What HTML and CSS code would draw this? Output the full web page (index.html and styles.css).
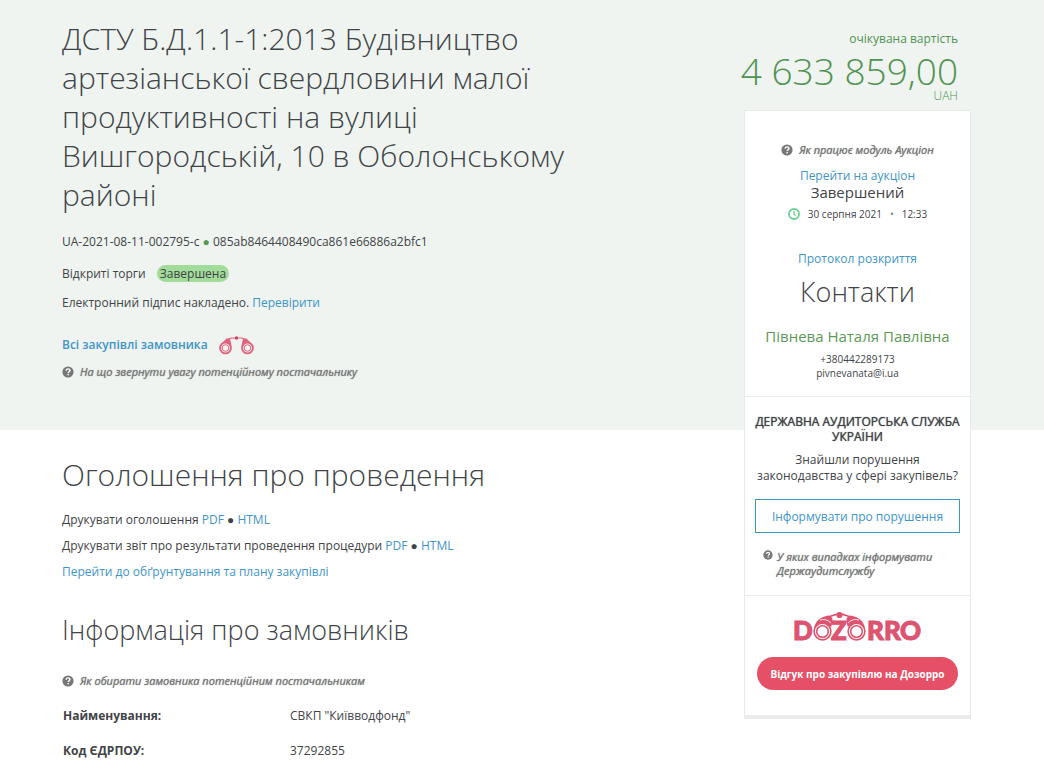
FILE: index.html
```html
<!DOCTYPE html>
<html lang="uk">
<head>
<meta charset="utf-8">
<meta name="viewport" content="width=device-width, initial-scale=1">
<title>Закупівля UA-2021-08-11-002795-c</title>
<link rel="stylesheet" href="styles.css">
</head>
<body>
<svg class="sprite" aria-hidden="true">
  <symbol id="question" viewBox="0 0 12 12">
    <circle cx="6" cy="6" r="5.6" fill="currentColor"/>
    <path d="M4.1 4.7c.1-1.200.9-1.800 1.900-1.800s1.900.6 1.900 1.600c0 1.200-1.500 1.200-1.700 2.500" fill="none" stroke="#fff" stroke-width="1.400"/>
    <rect x="5.400" y="7.900" width="1.500" height="1.400" fill="#fff"/>
  </symbol>
</svg>
<div class="page">
  <header class="hero">
    <h1 class="title">ДСТУ Б.Д.1.1-1:2013 Будівництво артезіанської свердловини малої продуктивності на вулиці Вишгородській, 10 в Оболонському районі</h1>
    <p class="tender-id">UA-2021-08-11-002795-c <span class="dot-green">●</span> 085ab8464408490ca861e66886a2bfc1</p>
    <p class="tender-type">Відкриті торги <span class="status">Завершена</span></p>
    <p class="signature">Електронний підпис накладено. <a href="#">Перевірити</a></p>
    <p class="customer"><a class="strong-link" href="#">Всі закупівлі замовника</a>
      <a href="#" aria-label="Dozorro"><svg class="binoculars" viewBox="0 0 36 20" fill="none" stroke="#e0627c">
        <path d="M2 9l5.500-5.500 3.500 0 1.500 7zM33 9l-5.500-5.500-3.500 0-1.500 7z" fill="#e0627c" stroke="none"/>
        <circle cx="6.500" cy="13" r="5.400" fill="#eff4f1" stroke-width="1.900"/>
        <circle cx="6.500" cy="13" r="3.300" stroke-width="1"/>
        <circle cx="28.500" cy="13" r="5.400" fill="#eff4f1" stroke-width="1.900"/>
        <circle cx="28.500" cy="13" r="3.300" stroke-width="1"/>
        <path d="M9 4.500l3-1.500h11l3 1.500" stroke-width="1.200"/>
        <circle cx="17.500" cy="3" r="1.700" fill="#d0405f" stroke="none"/>
      </svg></a></p>
    <a class="help" href="#"><svg class="help-icon" aria-hidden="true"><use href="#question"/></svg><span>На що звернути увагу потенційному постачальнику</span></a>
  </header>

  <main class="content">
    <section>
      <h2 class="heading">Оголошення про проведення</h2>
      <ul class="prints">
        <li>Друкувати оголошення <a href="#">PDF</a> ● <a href="#">HTML</a></li>
        <li>Друкувати звіт про результати проведення процедури <a href="#">PDF</a> ● <a href="#">HTML</a></li>
        <li><a href="#">Перейти до обґрунтування та плану закупівлі</a></li>
      </ul>
    </section>
    <section class="info">
      <h2 class="heading heading-small">Інформація про замовників</h2>
      <a class="help" href="#"><svg class="help-icon" aria-hidden="true"><use href="#question"/></svg><span>Як обирати замовника потенційним постачальникам</span></a>
      <table class="details">
        <tr><th scope="row">Найменування:</th><td>СВКП "Київводфонд"</td></tr>
        <tr><th scope="row">Код ЄДРПОУ:</th><td>37292855</td></tr>
      </table>
    </section>
  </main>

  <aside class="side">
    <div class="price">
      <p class="price-label">очікувана вартість</p>
      <p class="price-value">4 633 859,00</p>
      <p class="price-currency">UAH</p>
    </div>
    <div class="card">
      <section class="auction">
        <a class="help" href="#"><svg class="help-icon" aria-hidden="true"><use href="#question"/></svg><span>Як працює модуль Аукціон</span></a>
        <a class="auction-link" href="#">Перейти на аукціон</a>
        <p class="auction-state">Завершений</p>
        <p class="auction-date"><svg class="clock" viewBox="0 0 12 12" fill="none" stroke="#6ccf8f" aria-hidden="true">
          <circle cx="6" cy="6" r="5" stroke-width="1.800"/><path d="M6 3v3.400l1.800 1" stroke-width="1.200"/></svg>
          <span>30 серпня 2021</span><span class="bullet">•</span><span>12:33</span></p>
        <a class="protocol" href="#">Протокол розкриття</a>
        <h2 class="contacts">Контакти</h2>
        <p class="person">Півнева Наталя Павлівна</p>
        <p class="contact-line">+380442289173</p>
        <p class="contact-line">pivnevanata@i.ua</p>
      </section>
      <section class="audit">
        <h3 class="audit-title">ДЕРЖАВНА АУДИТОРСЬКА СЛУЖБА УКРАЇНИ</h3>
        <p class="audit-text">Знайшли порушення законодавства у сфері закупівель?</p>
        <button class="outline-button" type="button">Інформувати про порушення</button>
        <a class="help help-audit" href="#"><svg class="help-icon help-icon-small" aria-hidden="true"><use href="#question"/></svg><span>У яких випадках інформувати Держаудитслужбу</span></a>
      </section>
      <section class="dozorro">
        <svg class="logo" viewBox="0 0 128 30" role="img" aria-label="DOZORRO">
          <g fill="#dc5470">
            <path d="M20 15q3-8 9-10l5-1.500q5 1 4.500 5l-1 6zM71 15q-3-8-9-10l-5-1.500q-5 1-4.500 5l1 6z"/>
            <path d="M34 5L45.500 1.500 57 5" fill="none" stroke="#dc5470" stroke-width="1.800"/>
            <circle cx="45.500" cy="3" r="3.100"/>
          </g>
          <path d="M26 8q6-2 11 3M65 8q-6-2-11 3" fill="none" stroke="#fff" stroke-width=".8"/>
          <g fill="none" stroke="#dc5470" stroke-width="1.600">
            <circle cx="28.500" cy="19.500" r="8.400" fill="#fff"/>
            <circle cx="28.500" cy="19.500" r="5.800"/>
            <circle cx="62.500" cy="19.500" r="8.400" fill="#fff"/>
            <circle cx="62.500" cy="19.500" r="5.800"/>
          </g>
          <g class="logo-letters">
            <text x="-1" y="28">D</text><text x="37" y="28">Z</text>
            <text x="73" y="28">R</text><text x="90" y="28">R</text><text x="106" y="28">O</text>
          </g>
        </svg>
        <button class="review-button" type="button">Відгук про закупівлю на Дозорро</button>
      </section>
    </div>
  </aside>
</div>
</body>
</html>
```
FILE: styles.css
```css
* { box-sizing: border-box; }

body {
  margin: 0;
  background: #fff;
  color: #414447;
  font-family: "Open Sans", "Noto Sans", sans-serif;
  font-size: 12px;
  line-height: 18px;
}

h1, h2, h3, p, ul { margin: 0; padding: 0; font-weight: 400; }
ul { list-style: none; }
a { color: #3e95c8; text-decoration: none; }
button { font-family: inherit; cursor: pointer; }
.sprite { display: none; }

.page {
  display: grid;
  grid-template-columns: minmax(0, 1fr) 240px 73px;
  grid-template-rows: auto 1fr;
}

.hero {
  grid-column: 1 / -1;
  grid-row: 1;
  padding: 19px 313px 49px 62px;
  background: #eff4f1;
}

.content {
  grid-column: 1;
  grid-row: 2;
  padding: 25px 24px 0 62px;
}

.side {
  grid-column: 2;
  grid-row: 1 / 3;
  padding: 31px 0 24px;
}

.title {
  max-width: 540px;
  font-size: 30px;
  font-weight: 300;
  line-height: 39px;
}

.tender-id { margin-top: 19px; }
.dot-green { color: #4f9a56; }
.tender-type { margin-top: 14px; }
.status {
  display: inline-block;
  margin-left: 8px;
  padding: 0 3px;
  border-radius: 9px;
  background: #a2dc9b;
  line-height: 17px;
}
.signature { margin-top: 11px; }
.customer {
  display: flex;
  align-items: center;
  gap: 11px;
  height: 18px;
  margin-top: 24px;
}
.strong-link { font-weight: 600; }
.binoculars { display: block; width: 36px; height: 20px; }

.help {
  display: flex;
  align-items: center;
  gap: 6px;
  margin-top: 9px;
  color: #777;
  font-size: 11px;
  font-style: italic;
  text-shadow: 0 0 1px currentColor;
}
.help-icon { flex: none; width: 12px; height: 12px; }
.help-icon-small { width: 10px; height: 10px; }

.heading {
  font-size: 30px;
  font-weight: 300;
  line-height: 39px;
}
.heading-small { font-size: 27px; }
.prints {
  display: grid;
  gap: 8px;
  margin-top: 17px;
}
.info { margin-top: 29px; }
.info .help { margin-top: 23px; }
.details {
  margin-top: 8px;
  border-collapse: collapse;
}
.details th, .details td { height: 35px; padding: 0 0 0 1px; text-align: left; }
.details th { width: 227px; font-weight: 700; }

.price {
  padding-right: 13px;
  color: #4f9350;
  text-align: right;
}
.price-label { line-height: 16px; }
.price-value {
  font-size: 37px;
  font-weight: 300;
  line-height: 48px;
  white-space: nowrap;
}
.price-currency { margin-top: -7px; font-weight: 300; line-height: 16px; }

.card {
  margin: 6px 0 0 13px;
  border: 1px solid #e8ebe9;
  border-bottom: 4px solid #eaeaea;
  background: #fff;
  text-align: center;
}

.auction { padding: 30px 8px 16px; }
.auction .help { justify-content: center; margin: 0; }
.auction-link { display: block; margin-top: 8px; }
.auction-state { font-size: 15px; line-height: 14px; }
.auction-date {
  display: flex;
  align-items: center;
  justify-content: center;
  gap: 8px;
  margin-top: 6px;
  font-size: 10px;
}
.clock { width: 12px; height: 12px; }
.bullet { color: #4f9a56; }
.protocol { display: block; margin-top: 27px; }
.contacts {
  margin-top: 7px;
  font-size: 27px;
  font-weight: 300;
  line-height: 34px;
}
.person {
  margin: 18px 0 7px;
  color: #5c9a56;
  font-size: 15px;
}
.contact-line { font-size: 10px; line-height: 14px; }

.audit {
  padding: 17px 10px;
  border-top: 1px solid #e8ebe9;
}
.audit-title {
  margin: 0 -6px;
  font-size: 12px;
  line-height: 15px;
  text-shadow: 0 0 1px currentColor;
}
.audit-text { margin-top: 8px; line-height: 16px; }
.outline-button {
  width: 100%;
  height: 34px;
  margin-top: 15px;
  border: 1px solid #389fae;
  background: #fff;
  color: #3e95c8;
  font-size: 12px;
}
.help-audit {
  align-items: flex-start;
  gap: 4px;
  margin-top: 17px;
  padding-left: 8px;
  line-height: 14px;
  text-align: left;
}

.dozorro {
  padding: 16px 12px 25px;
  border-top: 1px solid #e8ebe9;
}
.logo { display: block; width: 128px; height: 30px; margin: 0 auto; overflow: visible; }
.logo-letters {
  fill: #dc5470;
  stroke: #dc5470;
  stroke-width: 1px;
  font-family: Lato, sans-serif;
  font-size: 26px;
  font-weight: 900;
}
.review-button {
  width: 100%;
  height: 33px;
  margin-top: 15px;
  border: 0;
  border-radius: 17px;
  background: #e65067;
  color: #fff;
  font-size: 10px;
  font-weight: 700;
}
```
